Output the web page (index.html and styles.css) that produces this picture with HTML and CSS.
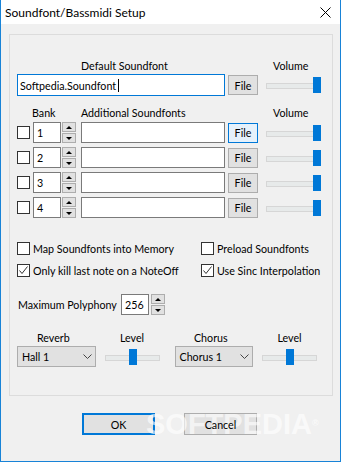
FILE: index.html
```html
<!DOCTYPE html>
<html lang="en">
<head>
  <meta charset="UTF-8" />
  <title>Soundfont/Bassmidi Setup</title>
  <link rel="stylesheet" href="styles.css">
</head>
<body>
  <div class="window">
    <div class="titlebar">
      <span>Soundfont/Bassmidi Setup</span>
      <svg class="close" width="11" height="11" viewBox="0 0 11 11"><path d="M0.5 0.5 L10.5 10.5 M10.5 0.5 L0.5 10.5" stroke="#000" stroke-width="1" fill="none"/></svg>
    </div>

    <div class="group">
      <div class="hdr">
        <span class="h1"></span>
        <span class="h2">Default Soundfont</span>
        <span class="h3">Volume</span>
      </div>
      <div class="row row-default">
        <div class="edit edit-main">Softpedia.Soundfont<span class="caret"></span></div>
        <button class="file">File</button>
        <div class="slider"><span class="thumb" style="left: 47px"></span></div>
      </div>

      <div class="hdr hdr-list">
        <span class="h1">Bank</span>
        <span class="h2">Additional Soundfonts</span>
        <span class="h3">Volume</span>
      </div>
      <div class="list">
        <div class="row">
          <span class="cb"></span>
          <div class="edit bank">1</div>
          <div class="spin"><span class="up"></span><span class="down"></span></div>
          <div class="edit sf"></div>
          <button class="file focus">File</button>
          <div class="slider"><span class="thumb" style="left: 47px"></span></div>
        </div>
        <div class="row">
          <span class="cb"></span>
          <div class="edit bank">2</div>
          <div class="spin"><span class="up"></span><span class="down"></span></div>
          <div class="edit sf"></div>
          <button class="file">File</button>
          <div class="slider"><span class="thumb" style="left: 47px"></span></div>
        </div>
        <div class="row">
          <span class="cb"></span>
          <div class="edit bank">3</div>
          <div class="spin"><span class="up"></span><span class="down"></span></div>
          <div class="edit sf"></div>
          <button class="file">File</button>
          <div class="slider"><span class="thumb" style="left: 47px"></span></div>
        </div>
        <div class="row">
          <span class="cb"></span>
          <div class="edit bank">4</div>
          <div class="spin"><span class="up"></span><span class="down"></span></div>
          <div class="edit sf"></div>
          <button class="file">File</button>
          <div class="slider"><span class="thumb" style="left: 47px"></span></div>
        </div>
      </div>

      <div class="checks">
        <div class="check-row">
          <div class="check"><span class="cb"></span><span>Map Soundfonts into Memory</span></div>
          <div class="check"><span class="cb"></span><span>Preload Soundfonts</span></div>
        </div>
        <div class="check-row">
          <div class="check"><span class="cb"><svg width="11" height="11" viewBox="0 0 11 11"><path d="M1.5 5.5 L4 8.5 L9.5 1.5" stroke="#333" stroke-width="1" fill="none"/></svg></span><span>Only kill last note on a NoteOff</span></div>
          <div class="check"><span class="cb"><svg width="11" height="11" viewBox="0 0 11 11"><path d="M1.5 5.5 L4 8.5 L9.5 1.5" stroke="#333" stroke-width="1" fill="none"/></svg></span><span>Use Sinc Interpolation</span></div>
        </div>
      </div>

      <div class="poly">
        <span class="poly-label">Maximum Polyphony</span>
        <div class="edit poly-edit">256</div>
        <div class="spin"><span class="up"></span><span class="down"></span></div>
      </div>

      <div class="hdr hdr-fx">
        <span class="fx-combo">Reverb</span>
        <span class="fx-level">Level</span>
        <span class="fx-combo">Chorus</span>
        <span class="fx-level">Level</span>
      </div>
      <div class="fx-row">
        <div class="combo">Hall 1<svg width="9" height="5" viewBox="0 0 9 5"><path d="M0.5 0.5 L4.5 4.5 L8.5 0.5" stroke="#444" stroke-width="1" fill="none"/></svg></div>
        <div class="slider fx-slider"><span class="thumb" style="left: 24px"></span></div>
        <div class="combo">Chorus 1<svg width="9" height="5" viewBox="0 0 9 5"><path d="M0.5 0.5 L4.5 4.5 L8.5 0.5" stroke="#444" stroke-width="1" fill="none"/></svg></div>
        <div class="slider fx-slider"><span class="thumb" style="left: 24px"></span></div>
      </div>
    </div>

    <div class="buttons">
      <button class="btn btn-default"><span>OK</span></button>
      <button class="btn"><span>Cancel</span></button>
    </div>

    <div class="watermark">SOFTPEDIA<sup>®</sup></div>
  </div>
</body>
</html>
```

FILE: styles.css
```css
* { box-sizing: border-box; }
body { margin: 0; background: #fff; font: 10.7px Lato, "Segoe UI", sans-serif; color: #000; }
button { font: inherit; color: #000; padding: 0; }

.window { position: relative; width: 341px; height: 462px; background: #f0f0f0; border: 1px solid #1883d7; border-top: 0; }
.titlebar { height: 24px; background: #fff; display: flex; align-items: center; justify-content: space-between; padding: 1px 9px 0 4px; font-size: 12px; }
.close { display: block; }

.group { width: 324px; height: 362px; margin: 10px 0 0 8px; border: 1px solid #dcdcdc; padding: 22px 0 0 7px; }

.hdr { display: flex; height: 17px; line-height: 17px; white-space: nowrap; }
.hdr .h1 { width: 64px; padding-left: 15px; }
.hdr .h2 { width: 192px; }
.hdr-list { margin-top: 8px; }

.row { display: flex; align-items: center; height: 21px; }
.row-default { height: 22px; }
.list { margin-top: 1px; display: flex; flex-direction: column; gap: 4px; }

.edit { height: 21px; background: #fff; border: 1px solid #7a7a7a; display: flex; align-items: center; padding-left: 3px; white-space: nowrap; }
.edit-main { width: 208px; height: 22px; border-color: #0078d7; padding-left: 2px; }
.caret { display: inline-block; width: 1px; height: 13px; background: #000; margin-left: 2px; }
.bank { width: 28px; margin-left: 3px; }
.sf { width: 144px; margin-left: 5px; }

.spin { width: 14px; height: 21px; margin-left: 1px; display: flex; flex-direction: column; gap: 1px; }
.spin span { flex: 1; background: #e1e1e1; border: 1px solid #adadad; position: relative; }
.spin span::after { content: ""; position: absolute; left: 3px; top: 3px; border-left: 3px solid transparent; border-right: 3px solid transparent; }
.spin .up::after { border-bottom: 3px solid #000; }
.spin .down::after { border-top: 3px solid #000; }

.cb { width: 13px; height: 13px; flex: none; background: #fff; border: 1px solid #333; display: flex; align-items: center; justify-content: center; }
.cb svg { display: block; }

.file { width: 30px; height: 20px; margin-left: 3px; background: #e1e1e1; border: 1px solid #adadad; }
.file.focus { background: #e5f1fb; border-color: #0078d7; }

.slider { position: relative; width: 55px; height: 16px; margin-left: 8px; }
.slider::before { content: ""; position: absolute; left: 0; right: 0; top: 6px; height: 4px; background: #e7eaea; border: 1px solid #d6d6d6; }
.thumb { position: absolute; top: 0; width: 8px; height: 16px; background: #0078d7; }

.checks { margin-top: 24px; display: flex; flex-direction: column; gap: 9px; }
.check-row { display: flex; height: 13px; }
.check { display: flex; align-items: center; gap: 3px; white-space: nowrap; }
.check:first-child { width: 184px; flex: none; }

.poly { margin-top: 17px; display: flex; align-items: center; height: 21px; }
.poly-label { width: 104px; padding-left: 1px; }
.poly-edit { width: 28px; }
.poly .spin { margin-left: 2px; }

.hdr-fx { margin-top: 14px; }
.fx-combo { width: 74px; text-align: center; }
.fx-level { width: 56px; margin: 0 15px; text-align: center; }

.fx-row { display: flex; align-items: center; height: 21px; }
.combo { width: 80px; height: 21px; background: #e1e1e1; border: 1px solid #adadad; display: flex; align-items: center; justify-content: space-between; padding: 0 3px 0 4px; }
.fx-slider { width: 56px; margin: 0 15px 0 9px; }

.buttons { display: flex; gap: 29px; margin: 17px 0 0 81px; }
.btn { width: 73px; height: 22px; background: #e1e1e1; border: 1px solid #adadad; }
.btn span { position: relative; z-index: 2; }
.btn-default { border: 2px solid #0078d7; }

.watermark { position: absolute; z-index: 1; left: 145px; top: 410px; font: bold 29px/29px "Liberation Sans", Arial, sans-serif; color: rgba(255, 255, 255, 0.65); pointer-events: none; }
.watermark sup { font-size: 9px; vertical-align: top; position: relative; top: -1px; }
```
